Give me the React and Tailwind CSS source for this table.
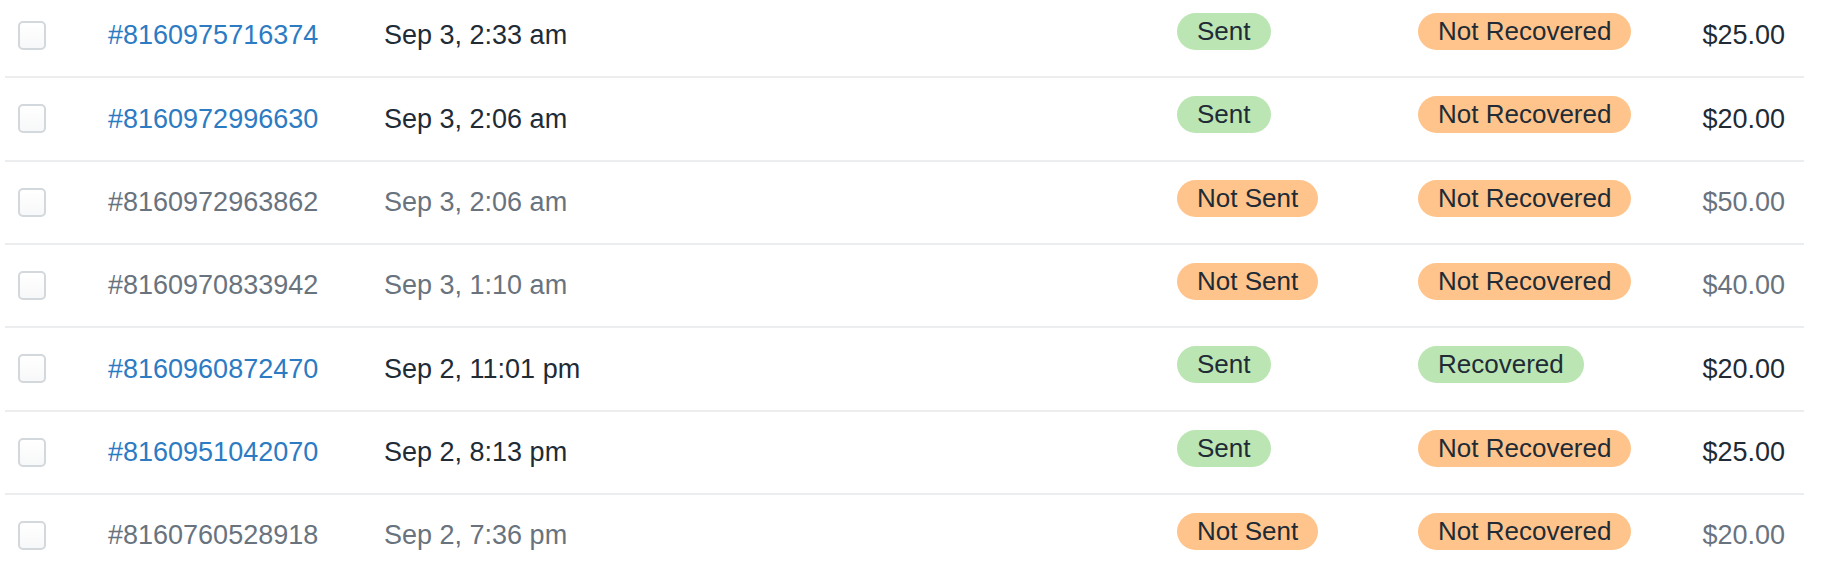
import React from "react";

const orders = [
  { id: "#8160975716374", date: "Sep 3, 2:33 am", sent: true, recovered: false, total: "$25.00" },
  { id: "#8160972996630", date: "Sep 3, 2:06 am", sent: true, recovered: false, total: "$20.00" },
  { id: "#8160972963862", date: "Sep 3, 2:06 am", sent: false, recovered: false, total: "$50.00" },
  { id: "#8160970833942", date: "Sep 3, 1:10 am", sent: false, recovered: false, total: "$40.00" },
  { id: "#8160960872470", date: "Sep 2, 11:01 pm", sent: true, recovered: true, total: "$20.00" },
  { id: "#8160951042070", date: "Sep 2, 8:13 pm", sent: true, recovered: false, total: "$25.00" },
  { id: "#8160760528918", date: "Sep 2, 7:36 pm", sent: false, recovered: false, total: "$20.00" },
];

const Pill = ({ good, children }) => (
  <span
    className={
      "mb-2 inline-flex h-[37px] items-center rounded-full px-[20px] text-[26px] text-[#212b36] " +
      (good ? "bg-[#bbe5b3]" : "bg-[#ffc48b]")
    }
  >
    {children}
  </span>
);

export default function App() {
  return (
    <div className="min-h-screen overflow-hidden bg-white font-['Liberation_Sans',Arial,sans-serif]">
      <div className="-mt-[5px] ml-[5px] w-[1799px]">
        {orders.map((o) => {
          // rows whose email was sent are shown as active
          const active = o.sent;
          return (
            <div
              key={o.id}
              className="flex h-[83.33px] items-center border-b-2 border-[#ebedee] text-[27px]"
            >
              <div className="w-[103px] shrink-0">
                <div className="ml-[13px] h-[29px] w-[28px] rounded-[5px] border-2 border-[#d3d8dc] bg-gradient-to-b from-white to-[#f7f8f9]" />
              </div>
              <div className={"w-[276px] shrink-0 " + (active ? "text-[#2c7bc3]" : "text-[#69737e]")}>
                {o.id}
              </div>
              <div className={"w-[793px] shrink-0 " + (active ? "text-[#212b36]" : "text-[#69737e]")}>
                {o.date}
              </div>
              <div className="flex w-[241px] shrink-0">
                <Pill good={o.sent}>{o.sent ? "Sent" : "Not Sent"}</Pill>
              </div>
              <div className="flex flex-1">
                <Pill good={o.recovered}>{o.recovered ? "Recovered" : "Not Recovered"}</Pill>
              </div>
              <div className={"pr-[19px] text-right " + (active ? "text-[#212b36]" : "text-[#69737e]")}>
                {o.total}
              </div>
            </div>
          );
        })}
      </div>
    </div>
  );
}
